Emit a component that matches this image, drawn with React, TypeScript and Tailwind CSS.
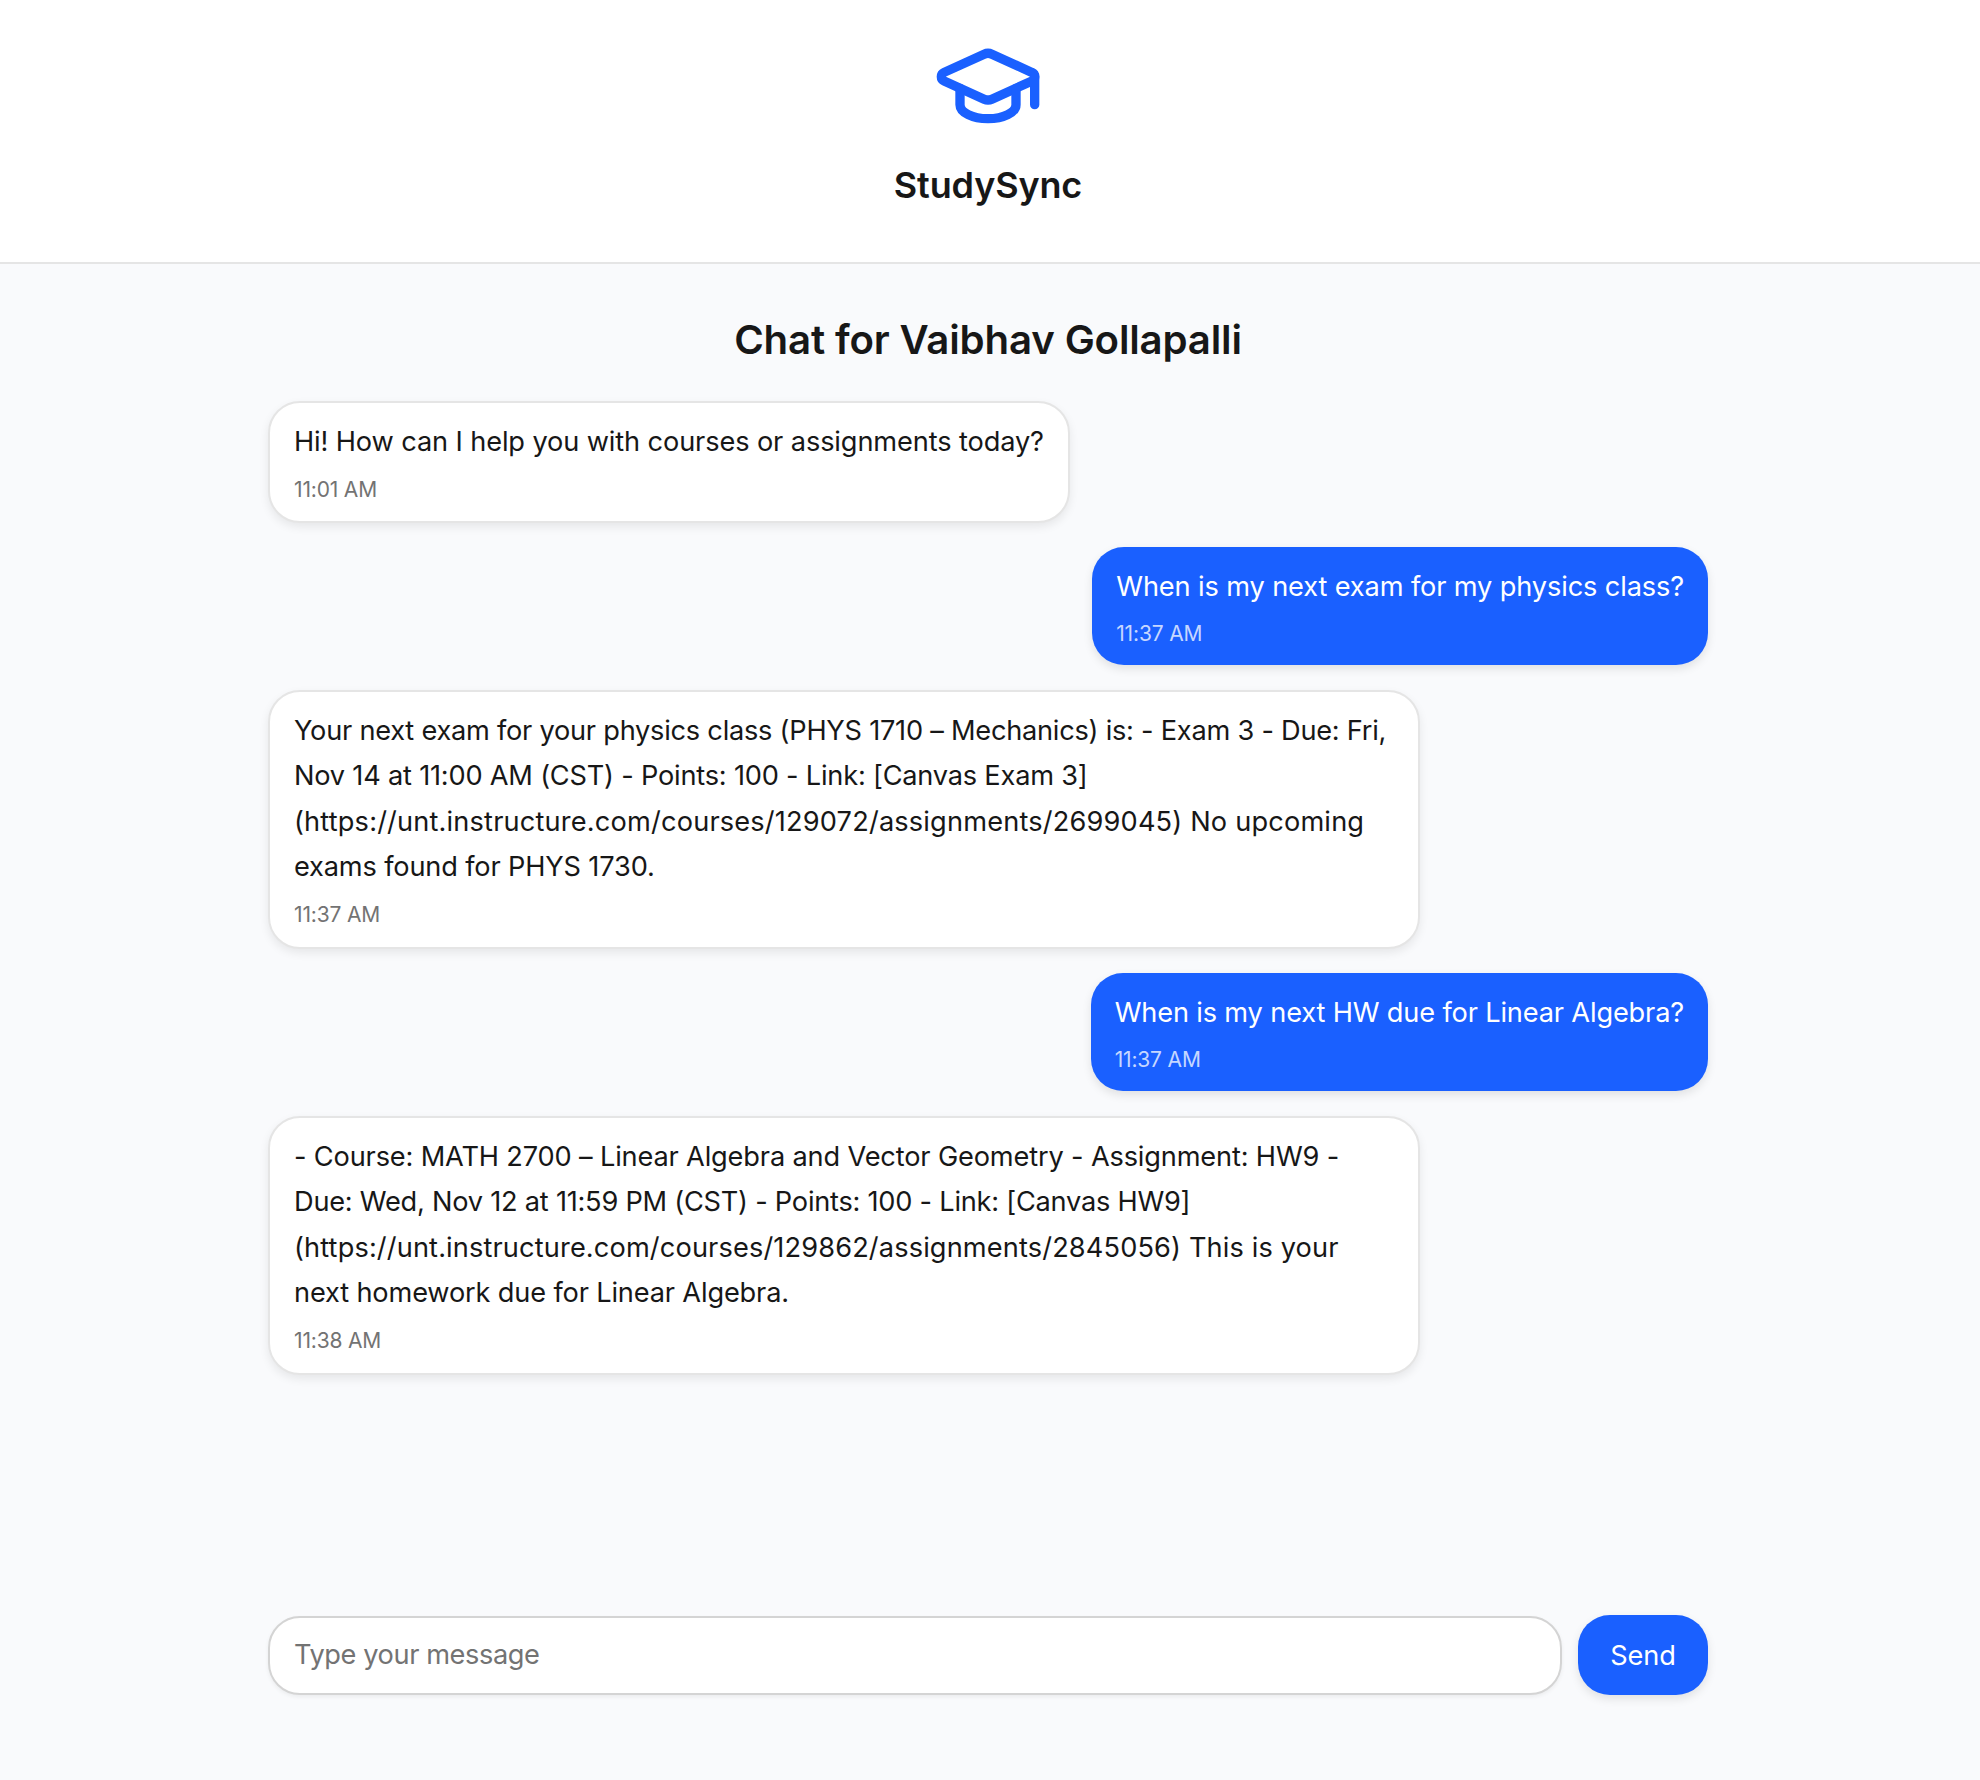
import React from "react";
import { GraduationCap } from "lucide-react";

type Line = { t: string; c?: string };

function Bot({ lines, time, wide, pb }: { lines: Line[]; time: string; wide?: boolean; pb?: string }) {
  return (
    <div className="flex justify-start">
      <div className={`rounded-[32px] border-2 border-[#e5e5e5] bg-white px-6 pt-[16px] shadow-[0_4px_10px_rgba(0,0,0,0.08)] ${pb ?? "pb-[16px]"} ${wide ? "w-[1152px]" : ""}`}>
        <p className="text-[27.2px] leading-[45.4px] whitespace-nowrap text-[#171717]">
          {lines.map((l) => (
            <span key={l.t} className={`block ${l.c ?? ""}`}>{l.t}</span>
          ))}
        </p>
        <p className="mt-[9.5px] text-[21px] leading-[32px] text-[#737373]">{time}</p>
      </div>
    </div>
  );
}

function User({ text, time, c }: { text: string; time: string; c?: string }) {
  return (
    <div className="flex justify-end">
      <div className="rounded-[32px] bg-[#1a60ff] px-6 pt-[17px] pb-[15.5px] text-white shadow-[0_4px_10px_rgba(0,0,0,0.1)]">
        <p className={`text-[27.2px] leading-[45.4px] ${c ?? ""}`}>{text}</p>
        <p className="mt-[8px] text-[21px] leading-[32px] text-[#c6d7ff]">{time}</p>
      </div>
    </div>
  );
}

export default function App() {
  return (
    <div className="flex h-[1780px] flex-col bg-[#f9fafc] font-['Inter',sans-serif] tracking-[-0.01em]">
      <header className="flex h-[264px] flex-col items-center border-b-2 border-[#e5e5e5] bg-white pt-[30px] pr-1">
        <GraduationCap size={112} strokeWidth={2} color="#1a60ff" />
        <h1 className="mt-[21px] text-[36px] leading-[44px] font-semibold text-[#171717]">StudySync</h1>
      </header>
      <div className="flex flex-1 flex-col pr-1">
        <main className="mx-auto flex w-[1440px] flex-1 flex-col">
          <h2 className="mt-[50px] mb-[35px] text-center text-[40.2px] leading-[52px] font-semibold text-[#171717]">Chat for Vaibhav Gollapalli</h2>
          <div className="flex flex-col gap-[24.5px]">
            <Bot pb="pb-[15px]" lines={[{ t: "Hi! How can I help you with courses or assignments today?", c: "tracking-[-0.12px]" }]} time="11:01 AM" />
            <User c="tracking-[-0.13px]" text="When is my next exam for my physics class?" time="11:37 AM" />
            <Bot
              wide
              lines={[
                { t: "Your next exam for your physics class (PHYS 1710 – Mechanics) is: - Exam 3 - Due: Fri,", c: "tracking-[-0.245px]" },
                { t: "Nov 14 at 11:00 AM (CST) - Points: 100 - Link: [Canvas Exam 3]", c: "tracking-[-0.21px]" },
                { t: "(https://unt.instructure.com/courses/129072/assignments/2699045) No upcoming", c: "tracking-[0.17px]" },
                { t: "exams found for PHYS 1730." },
              ]}
              time="11:37 AM"
            />
            <User text="When is my next HW due for Linear Algebra?" time="11:37 AM" />
            <Bot
              wide
              lines={[
                { t: "- Course: MATH 2700 – Linear Algebra and Vector Geometry - Assignment: HW9 -" },
                { t: "Due: Wed, Nov 12 at 11:59 PM (CST) - Points: 100 - Link: [Canvas HW9]", c: "tracking-[-0.24px]" },
                { t: "(https://unt.instructure.com/courses/129862/assignments/2845056) This is your", c: "tracking-[0.13px]" },
                { t: "next homework due for Linear Algebra." },
              ]}
              time="11:38 AM"
            />
          </div>
          <form className="mt-auto mb-[85px] flex items-center gap-4">
            <input readOnly placeholder="Type your message" className="h-[79px] flex-1 rounded-[32px] border-2 border-[#d4d4d4] bg-white px-6 pb-[2px] text-[27.2px] tracking-[-0.015em] text-[#171717] shadow-[0_2px_4px_rgba(0,0,0,0.06)] outline-none placeholder:text-[#737373]" />
            <button type="button" className="h-[80px] w-[130px] rounded-[32px] bg-[#1a60ff] pt-[3px] text-[27.2px] text-white shadow-[0_4px_10px_rgba(0,0,0,0.1)]">Send</button>
          </form>
        </main>
      </div>
    </div>
  );
}
